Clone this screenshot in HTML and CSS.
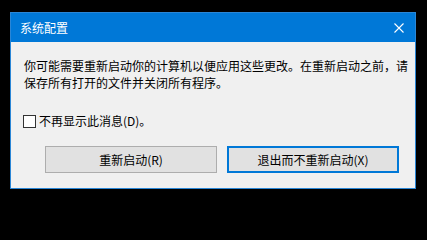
FILE: index.html
```html
<!DOCTYPE html>
<html lang="zh-CN">
<head>
<meta charset="utf-8">
<title>系统配置</title>
<link rel="stylesheet" href="styles.css">
</head>
<body>
<div class="window">
  <div class="titlebar">
    <span class="title">系统配置</span>
    <span class="close" aria-label="关闭">
      <svg width="10" height="10" viewBox="0 0 10 10"><path d="M0.5 0.5 L9.5 9.5 M9.5 0.5 L0.5 9.5" stroke="#ffffff" stroke-width="1.1" fill="none"/></svg>
    </span>
  </div>
  <div class="content">
    <p class="message">你可能需要重新启动你的计算机以便应用这些更改。在重新启动之前，请保存所有打开的文件并关闭所有程序。</p>
    <label class="check"><span class="box"></span><span class="check-label">不再显示此消息(D)。</span></label>
    <div class="buttons">
      <button class="btn">重新启动(R)</button>
      <button class="btn btn-default">退出而不重新启动(X)</button>
    </div>
  </div>
</div>
</body>
</html>
```
FILE: styles.css
```css
html, body {
  margin: 0;
  padding: 0;
  background: #000000;
}
body {
  width: 427px;
  height: 200px;
  overflow: hidden;
  font-family: "Noto Sans CJK SC", "Noto Sans", sans-serif;
  font-size: 12px;
  color: #000000;
}
.window {
  margin: 12px 0 0 10px;
  width: 404px;
  height: 175px;
  border: 1px solid #2a86d6;
  background: #f0f0f0;
  display: flex;
  flex-direction: column;
}
.titlebar {
  height: 29px;
  background: #0078d7;
  color: #ffffff;
  display: flex;
  align-items: center;
  justify-content: space-between;
  padding: 0 11px 0 9px;
  flex-shrink: 0;
}
.title {
  font-size: 12px;
  line-height: 16px;
  padding-top: 1px;
}
.close {
  display: flex;
  width: 10px;
  height: 10px;
  margin-top: 1px;
}
.content {
  padding: 15px 12px 0 13px;
  display: flex;
  flex-direction: column;
}
.message {
  margin: 0;
  width: 388px;
  line-height: 17px;
}
.check {
  display: flex;
  align-items: center;
  margin-top: 23px;
  margin-left: -1px;
  height: 14px;
}
.box {
  width: 11px;
  height: 11px;
  border: 1px solid #333333;
  background: #ffffff;
  flex-shrink: 0;
}
.check-label {
  margin-left: 3px;
  line-height: 14px;
}
.buttons {
  display: flex;
  gap: 10px;
  margin-top: 18px;
  padding-left: 21px;
}
.btn {
  width: 172px;
  height: 27px;
  box-sizing: border-box;
  border: 1px solid #adadad;
  background: #e1e1e1;
  font-family: "Noto Sans CJK SC", "Noto Sans", sans-serif;
  font-size: 12px;
  color: #000000;
  padding: 0;
  line-height: 16px;
}
.btn-default {
  border: 2px solid #0078d7;
}
```
